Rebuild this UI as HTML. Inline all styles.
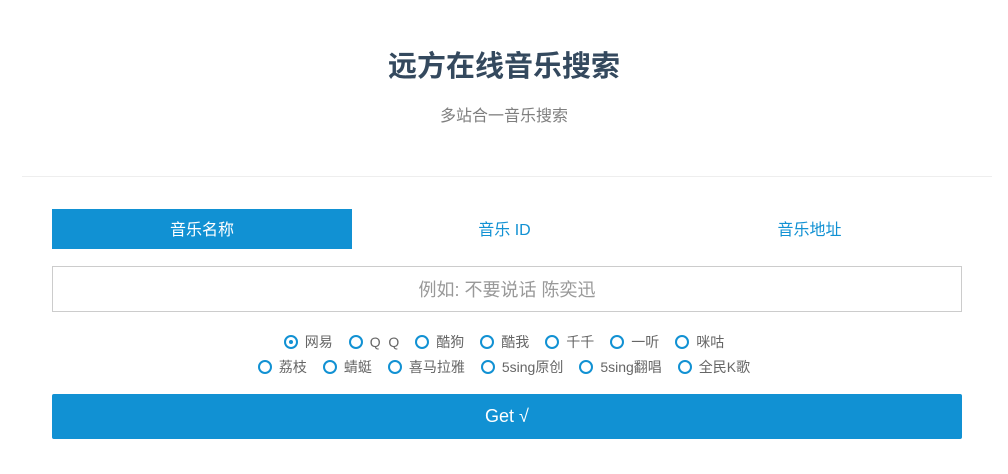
<!DOCTYPE html>
<html><head><meta charset="utf-8"><style>
body{margin:0;background:#fff;font-family:"Liberation Sans","Noto Sans CJK SC",sans-serif;width:1008px;height:474px;overflow:hidden;position:relative}
h1{position:absolute;top:47px;left:0;width:1008px;text-align:center;margin:0;font-size:29px;line-height:40px;color:#34495e;font-weight:bold}
.sub{position:absolute;top:106px;left:0;width:1008px;text-align:center;font-size:16px;line-height:22px;color:#7f7f7f}
.hr{position:absolute;top:176px;left:22px;width:970px;border-top:1px solid #eee}
.tabs{position:absolute;top:209px;left:52px;width:910px;height:40px;display:flex}
.tabs div{flex:1;text-align:center;line-height:44px;font-size:16px;color:#1191d3}
.tabs div.a{background:#1191d3;color:#fff;flex:0 0 300px}
.inp{position:absolute;top:266px;left:52px;width:908px;height:44px;border:1px solid #ccc;text-align:center;line-height:46px;font-size:18px;color:#999}
.row{position:absolute;left:0;width:1008px;display:flex;justify-content:center;font-size:14px;color:#666;line-height:20px}
.row span{display:inline-flex;align-items:center;margin:0 8px}
.row i{display:inline-block;width:10px;height:10px;border:2px solid #1191d3;border-radius:50%;margin-right:7px;position:relative}
.row i.c::after{content:"";position:absolute;left:3px;top:3px;width:4px;height:4px;border-radius:50%;background:#1191d3}
.btn{position:absolute;top:394px;left:52px;width:910px;height:45px;background:#1191d3;color:#fff;text-align:center;line-height:45px;font-size:18px;border-radius:2px}
</style></head><body>
<h1>远方在线音乐搜索</h1>
<div class="sub">多站合一音乐搜索</div>
<div class="hr"></div>
<div class="tabs"><div class="a">音乐名称</div><div>音乐 ID</div><div>音乐地址</div></div>
<div class="inp">例如: 不要说话 陈奕迅</div>
<div class="row" style="top:332px"><span><i class="c"></i>网易</span><span><i></i>Q&nbsp;&nbsp;Q</span><span><i></i>酷狗</span><span><i></i>酷我</span><span><i></i>千千</span><span><i></i>一听</span><span><i></i>咪咕</span></div>
<div class="row" style="top:357px"><span><i></i>荔枝</span><span><i></i>蜻蜓</span><span><i></i>喜马拉雅</span><span><i></i>5sing原创</span><span><i></i>5sing翻唱</span><span><i></i>全民K歌</span></div>
<div class="btn">Get √</div>
</body></html>
